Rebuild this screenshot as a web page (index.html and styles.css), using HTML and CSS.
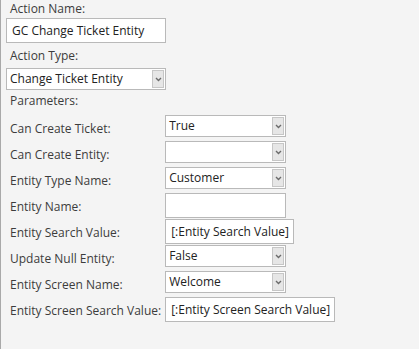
FILE: index.html
```html
<!DOCTYPE html>
<html lang="en">

<head>
    <meta charset="UTF-8">
    <title>Action Editor</title>
    <link rel="stylesheet" href="styles.css">
</head>

<body>
    <div class="panel">
        <div class="label">Action Name:</div>
        <div class="textbox wide">GC Change Ticket Entity</div>

        <div class="label type-label">Action Type:</div>
        <div class="select wide">
            <span class="value">Change Ticket Entity</span>
            <span class="arrow"><svg width="7" height="5" viewBox="0 0 7 5"><path d="M1 1 L3.5 3.5 L6 1" fill="none" stroke="#6b6b6b" stroke-width="1.4"/></svg></span>
        </div>

        <div class="label params-label">Parameters:</div>

        <div class="params">
            <div class="plabel">Can Create Ticket:</div>
            <div class="select"><span class="value">True</span><span class="arrow"><svg width="7" height="5" viewBox="0 0 7 5"><path d="M1 1 L3.5 3.5 L6 1" fill="none" stroke="#6b6b6b" stroke-width="1.4"/></svg></span></div>

            <div class="plabel">Can Create Entity:</div>
            <div class="select"><span class="value"></span><span class="arrow"><svg width="7" height="5" viewBox="0 0 7 5"><path d="M1 1 L3.5 3.5 L6 1" fill="none" stroke="#6b6b6b" stroke-width="1.4"/></svg></span></div>

            <div class="plabel">Entity Type Name:</div>
            <div class="select"><span class="value">Customer</span><span class="arrow"><svg width="7" height="5" viewBox="0 0 7 5"><path d="M1 1 L3.5 3.5 L6 1" fill="none" stroke="#6b6b6b" stroke-width="1.4"/></svg></span></div>

            <div class="plabel">Entity Name:</div>
            <div class="textbox short"></div>

            <div class="plabel">Entity Search Value:</div>
            <div class="textbox">[:Entity Search Value]</div>

            <div class="plabel">Update Null Entity:</div>
            <div class="select"><span class="value">False</span><span class="arrow"><svg width="7" height="5" viewBox="0 0 7 5"><path d="M1 1 L3.5 3.5 L6 1" fill="none" stroke="#6b6b6b" stroke-width="1.4"/></svg></span></div>

            <div class="plabel">Entity Screen Name:</div>
            <div class="select"><span class="value">Welcome</span><span class="arrow"><svg width="7" height="5" viewBox="0 0 7 5"><path d="M1 1 L3.5 3.5 L6 1" fill="none" stroke="#6b6b6b" stroke-width="1.4"/></svg></span></div>

            <div class="plabel">Entity Screen Search Value:</div>
            <div class="textbox">[:Entity Screen Search Value]</div>
        </div>
    </div>
</body>

</html>
```

FILE: styles.css
```css
body {
    margin: 0;
    background: #f4f4f4;
    font-family: "Open Sans", "Noto Sans", sans-serif;
    font-size: 12px;
    color: #3c3c3c;
    height: 349px;
    border-left: 1px solid #a9a9a9;
    box-sizing: border-box;
}

.panel {
    padding-left: 5px;
}

.label {
    height: 17px;
    line-height: 17px;
    padding-left: 4px;
}

.type-label {
    margin-top: 4px;
}

.params-label {
    margin-top: 2px;
}

.textbox,
.select {
    box-sizing: border-box;
    background: #fff;
    border: 1px solid #b9b9b9;
    color: #222;
    white-space: nowrap;
}

.textbox {
    display: inline-block;
    height: 25px;
    line-height: 23px;
    padding: 0 4px 0 5px;
    margin-top: 1px;
}

.textbox.wide {
    display: block;
    width: 160px;
}

.textbox.short {
    width: 121px;
}

.select {
    display: flex;
    align-items: stretch;
    width: 121px;
    height: 22px;
    line-height: 20px;
}

.select.wide {
    width: 160px;
    margin-top: 4px;
}

.select .value {
    flex: 1;
    padding-left: 3px;
}

.select .arrow {
    width: 10px;
    margin: 1px;
    background: #e6e6e6;
    border: 1px solid #c6c6c6;
    display: flex;
    align-items: center;
    justify-content: center;
}

.params {
    display: grid;
    grid-template-columns: auto auto;
    grid-auto-rows: 26px;
    justify-content: start;
    justify-items: start;
    column-gap: 4px;
    margin-top: 6px;
    padding-left: 4px;
}

.plabel {
    align-self: center;
}

.params .textbox {
    margin-top: 0;
}
```
